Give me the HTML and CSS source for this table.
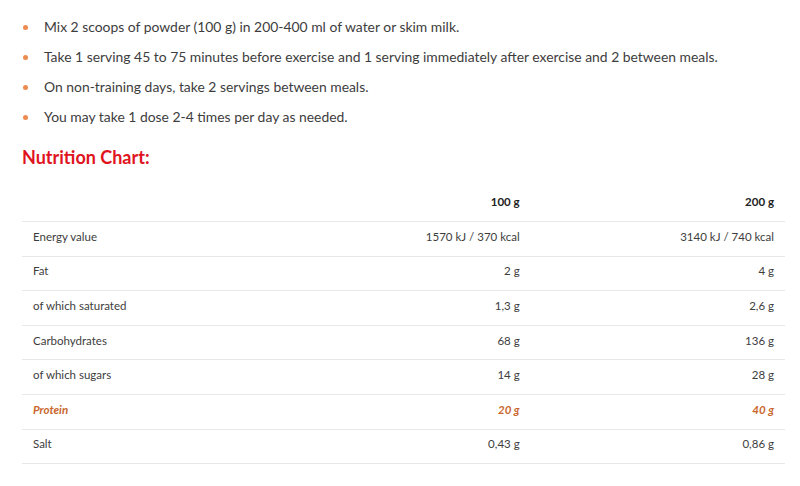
FILE: index.html
```html
<!DOCTYPE html>
<html>
<head>
<meta charset="utf-8">
<link rel="stylesheet" href="styles.css">
</head>
<body>
<div class="page">
  <ul class="usage">
    <li>Mix 2 scoops of powder (100 g) in 200-400 ml of water or skim milk.</li>
    <li>Take 1 serving 45 to 75 minutes before exercise and 1 serving immediately after exercise and 2 between meals.</li>
    <li>On non-training days, take 2 servings between meals.</li>
    <li>You may take 1 dose 2-4 times per day as needed.</li>
  </ul>
  <h2 class="title">Nutrition Chart:</h2>
  <table class="chart">
    <thead>
      <tr><th></th><th>100 g</th><th>200 g</th></tr>
    </thead>
    <tbody>
      <tr><td>Energy value</td><td>1570 kJ / 370 kcal</td><td>3140 kJ / 740 kcal</td></tr>
      <tr><td>Fat</td><td>2 g</td><td>4 g</td></tr>
      <tr><td>of which saturated</td><td>1,3 g</td><td>2,6 g</td></tr>
      <tr><td>Carbohydrates</td><td>68 g</td><td>136 g</td></tr>
      <tr><td>of which sugars</td><td>14 g</td><td>28 g</td></tr>
      <tr class="hl"><td>Protein</td><td>20 g</td><td>40 g</td></tr>
      <tr><td>Salt</td><td>0,43 g</td><td>0,86 g</td></tr>
    </tbody>
  </table>
</div>
</body>
</html>
```
FILE: styles.css
```css
html, body {
  margin: 0;
  background: #fff;
}
body {
  font-family: Lato, "Open Sans", sans-serif;
  color: #3d3d3d;
}
.page {
  padding: 12px 15px 0 22px;
}
.usage {
  list-style: none;
  margin: 0;
  padding: 0;
}
.usage li {
  position: relative;
  padding-left: 22px;
  font-size: 13.9px;
  line-height: 30px;
  height: 30px;
}
.usage li::before {
  content: "";
  position: absolute;
  left: 1px;
  top: 13px;
  width: 5px;
  height: 5px;
  border-radius: 50%;
  background: #ec8a4f;
}
.title {
  margin: 13px 0 0 0;
  font-size: 18px;
  line-height: 24px;
  font-weight: 700;
  color: #e0141e;
}
.chart {
  margin-top: 18px;
  width: 763px;
  border-collapse: collapse;
  table-layout: fixed;
  font-size: 11.5px;
}
.chart tr {
  height: 34.6px;
}
.chart th, .chart td {
  padding: 0 11px 5px;
  border-bottom: 1px solid #e8e8e8;
  text-align: right;
  vertical-align: middle;
  font-weight: 400;
  color: #3d3d3d;
}
.chart th {
  font-weight: 700;
  color: #222;
}
.chart td:first-child {
  text-align: left;
}
.chart .hl td {
  color: #c9662d;
  font-weight: 700;
  font-style: italic;
}
```
